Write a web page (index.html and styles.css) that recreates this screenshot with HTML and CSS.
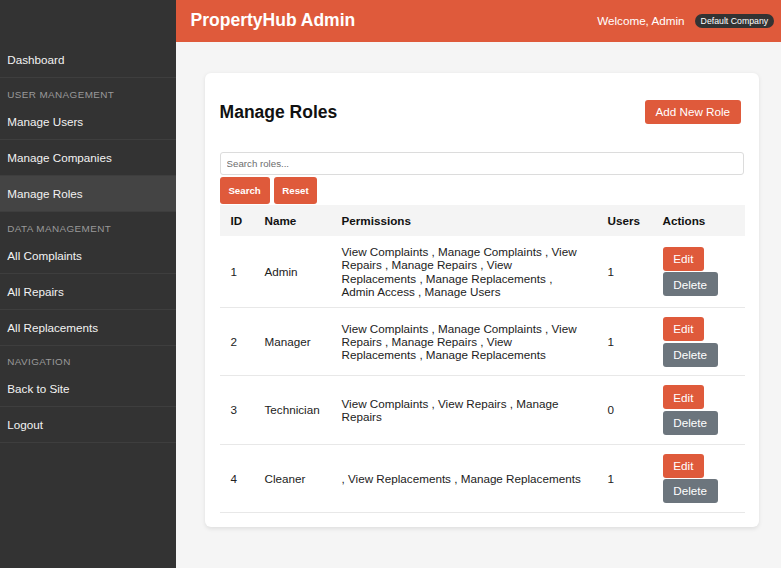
FILE: index.html
```html
<!DOCTYPE html>
<html lang="en">
<head>
<meta charset="utf-8">
<title>PropertyHub Admin - Manage Roles</title>
<link rel="stylesheet" href="styles.css">
</head>
<body>
<div class="layout">
  <aside class="sidebar">
    <nav>
      <a class="nav-link" href="#">Dashboard</a>
      <div class="nav-label">User Management</div>
      <a class="nav-link" href="#">Manage Users</a>
      <a class="nav-link" href="#">Manage Companies</a>
      <a class="nav-link active" href="#">Manage Roles</a>
      <div class="nav-label">Data Management</div>
      <a class="nav-link" href="#">All Complaints</a>
      <a class="nav-link" href="#">All Repairs</a>
      <a class="nav-link" href="#">All Replacements</a>
      <div class="nav-label">Navigation</div>
      <a class="nav-link" href="#">Back to Site</a>
      <a class="nav-link" href="#">Logout</a>
    </nav>
  </aside>
  <div class="main">
    <header class="topbar">
      <div class="brand">PropertyHub Admin</div>
      <div class="user-info">
        <span class="welcome">Welcome, Admin</span>
        <span class="badge">Default Company</span>
      </div>
    </header>
    <div class="content">
      <div class="card">
        <div class="page-head">
          <h2 class="page-title">Manage Roles</h2>
          <button class="btn btn-primary btn-add">Add New Role</button>
        </div>
        <form class="search-form">
          <input class="search-input" type="text" placeholder="Search roles...">
          <div class="search-actions">
            <button type="button" class="btn-sm">Search</button>
            <button type="button" class="btn-sm">Reset</button>
          </div>
        </form>
        <table class="roles">
          <colgroup>
            <col class="c-id"><col class="c-name"><col class="c-perm"><col class="c-users"><col class="c-actions">
          </colgroup>
          <thead>
            <tr><th>ID</th><th>Name</th><th>Permissions</th><th>Users</th><th>Actions</th></tr>
          </thead>
          <tbody>
            <tr>
              <td>1</td><td>Admin</td>
              <td>View Complaints , Manage Complaints , View Repairs , Manage Repairs , View Replacements , Manage Replacements , Admin Access , Manage Users</td>
              <td>1</td>
              <td><div class="actions"><button class="btn btn-primary">Edit</button><button class="btn btn-secondary">Delete</button></div></td>
            </tr>
            <tr>
              <td>2</td><td>Manager</td>
              <td>View Complaints , Manage Complaints , View Repairs , Manage Repairs , View Replacements , Manage Replacements</td>
              <td>1</td>
              <td><div class="actions"><button class="btn btn-primary">Edit</button><button class="btn btn-secondary">Delete</button></div></td>
            </tr>
            <tr>
              <td>3</td><td>Technician</td>
              <td>View Complaints , View Repairs , Manage Repairs</td>
              <td>0</td>
              <td><div class="actions"><button class="btn btn-primary">Edit</button><button class="btn btn-secondary">Delete</button></div></td>
            </tr>
            <tr>
              <td>4</td><td>Cleaner</td>
              <td>, View Replacements , Manage Replacements</td>
              <td>1</td>
              <td><div class="actions"><button class="btn btn-primary">Edit</button><button class="btn btn-secondary">Delete</button></div></td>
            </tr>
          </tbody>
        </table>
      </div>
    </div>
  </div>
</div>
</body>
</html>
```
FILE: styles.css
```css
* { box-sizing: border-box; }
html, body { margin: 0; padding: 0; }
body {
  font-family: "Liberation Sans", Arial, Helvetica, sans-serif;
  font-size: 11.68px;
  color: #222;
  background: #f5f5f5;
}
.layout { display: flex; min-height: 100vh; }

.sidebar {
  width: 176px;
  flex: 0 0 176px;
  background: #333333;
  padding-top: 42.4px;
  min-height: 568px;
}
.sidebar nav { display: flex; flex-direction: column; }
.nav-link {
  display: block;
  color: #f2f2f2;
  text-decoration: none;
  font-size: 11.68px;
  line-height: 13.4px;
  padding: 10.8px 7.3px;
  border-bottom: 1px solid #3e3e3e;
}
.nav-link.active { background: #444444; }
.nav-label {
  color: #9a9a9a;
  text-transform: uppercase;
  font-size: 9.9px;
  line-height: 11.4px;
  letter-spacing: 0.4px;
  padding: 10.65px 7.3px 3.65px;
}

.main { flex: 1; display: flex; flex-direction: column; min-width: 0; }
.topbar {
  height: 41.7px;
  background: #df5a3b;
  color: #fff;
  display: flex;
  align-items: center;
  justify-content: space-between;
  padding: 0 7px 0 14.6px;
}
.brand { font-size: 17.5px; font-weight: bold; }
.user-info { display: flex; align-items: center; gap: 10.2px; }
.welcome { font-size: 11.68px; }
.badge {
  background: #333;
  color: #fff;
  font-size: 8.76px;
  line-height: 10px;
  padding: 2.2px 5.84px;
  border-radius: 10px;
}

.content { padding: 31.3px 22px 20px 29px; }
.card {
  background: #fff;
  border-radius: 6px;
  box-shadow: 0 1.5px 4px rgba(0,0,0,0.09);
  padding: 14.6px 14.6px 14.2px;
}
.page-head {
  display: flex;
  align-items: center;
  justify-content: space-between;
  margin-bottom: 15.4px;
}
.page-title {
  margin: 14.5px 0;
  font-size: 17.5px;
  line-height: 20px;
  color: #111;
}
.btn {
  border: none;
  border-radius: 3px;
  color: #fff;
  font-family: "Liberation Sans", Arial, Helvetica, sans-serif;
  font-size: 11.68px;
  line-height: 13.4px;
  padding: 5.3px 10.8px;
  cursor: pointer;
}
.btn-primary { background: #df5a3b; }
.btn-secondary { background: #6c757d; }
.btn-add { margin-right: 3.5px; }

.search-form { margin: 0; }
.search-input {
  display: block;
  width: 100%;
  height: 23px;
  border: 1px solid #dcdcdc;
  border-radius: 3px;
  padding: 0 6px;
  font-family: "Liberation Sans", Arial, Helvetica, sans-serif;
  font-size: 9.7px;
  color: #333;
}
.search-input::placeholder { color: #6d6d6d; }
.search-actions { display: flex; gap: 4px; margin-top: 1.7px; }
.btn-sm {
  border: none;
  border-radius: 3px;
  background: #df5a3b;
  color: #fff;
  font-family: "Liberation Sans", Arial, Helvetica, sans-serif;
  font-weight: bold;
  font-size: 9.7px;
  line-height: 11.2px;
  padding: 8.2px 8.8px;
}

.roles {
  width: 100%;
  border-collapse: collapse;
  table-layout: fixed;
  margin-top: 0.7px;
}
.c-id { width: 34px; }
.c-name { width: 77px; }
.c-perm { width: 266px; }
.c-users { width: 55px; }
.c-actions { width: 93px; }
.roles th, .roles td {
  text-align: left;
  vertical-align: middle;
  padding: 8.8px 10.95px;
  line-height: 13.4px;
  font-size: 11.68px;
}
.roles th { background: #f4f4f4; font-weight: bold; color: #111; }
.roles td { border-bottom: 1px solid #e8e8e8; color: #222; }
.actions { display: flex; flex-direction: column; align-items: flex-start; gap: 1.7px; }
```
